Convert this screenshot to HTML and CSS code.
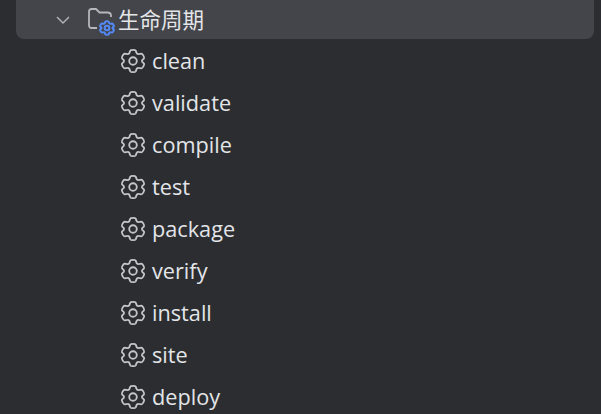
FILE: index.html
```html
<!DOCTYPE html>
<html lang="zh-CN">
<head>
  <meta charset="UTF-8">
  <title>Maven</title>
  <link rel="stylesheet" href="styles.css">
</head>
<body>
  <svg class="defs" width="0" height="0">
    <symbol id="gear" viewBox="0 0 24 24">
      <path d="M9.500 2.500C10 1.500 14 1.500 14.500 2.500L15.500 5C16 5.500 16.500 5.700 17 5.600L19.700 5.200C20.800 5.200 22.800 8.700 22.200 9.600L20.500 11.200C20.200 11.700 20.200 12.300 20.500 12.800L22.200 14.400C22.800 15.300 20.800 18.800 19.700 18.800L17 18.400C16.500 18.300 16 18.500 15.500 19L14.500 21.500C14 22.500 10 22.500 9.500 21.500L8.500 19C8 18.500 7.500 18.300 7 18.400L4.300 18.800C3.200 18.800 1.200 15.300 1.800 14.400L3.500 12.800C3.800 12.300 3.800 11.700 3.500 11.200L1.800 9.600C1.200 8.700 3.200 5.200 4.300 5.200L7 5.600C7.500 5.700 8 5.500 8.500 5z" fill="none" stroke="currentColor" stroke-linejoin="round"/>
      <circle cx="12" cy="12" r="3.500" fill="none" stroke="currentColor"/>
    </symbol>
  </svg>

  <div class="tree">
    <div class="row group">
      <svg class="chevron" viewBox="0 0 16 16"><path d="M2 5l6 6 6-6" fill="none" stroke="currentColor" stroke-width="1.500"/></svg>
      <span class="folder">
        <svg class="folder-icon" viewBox="0 0 26 26"><path d="M10 21H4.500C3 21 2 20 2 18.500V4.500C2 3 3 2 4.500 2H9l3.500 3.500h8C22.500 5.500 24 6.500 24 8.500V10" fill="none" stroke="currentColor" stroke-width="1.800"/></svg>
        <svg class="folder-gear"><use href="#gear"/></svg>
      </span>
      <span class="label">生命周期</span>
    </div>
    <div class="row goal"><svg class="gear"><use href="#gear"/></svg><span class="label">clean</span></div>
    <div class="row goal"><svg class="gear"><use href="#gear"/></svg><span class="label">validate</span></div>
    <div class="row goal"><svg class="gear"><use href="#gear"/></svg><span class="label">compile</span></div>
    <div class="row goal"><svg class="gear"><use href="#gear"/></svg><span class="label">test</span></div>
    <div class="row goal"><svg class="gear"><use href="#gear"/></svg><span class="label">package</span></div>
    <div class="row goal"><svg class="gear"><use href="#gear"/></svg><span class="label">verify</span></div>
    <div class="row goal"><svg class="gear"><use href="#gear"/></svg><span class="label">install</span></div>
    <div class="row goal"><svg class="gear"><use href="#gear"/></svg><span class="label">site</span></div>
    <div class="row goal"><svg class="gear"><use href="#gear"/></svg><span class="label">deploy</span></div>
  </div>
</body>
</html>
```

FILE: styles.css
```css
html, body {
  height: 100%;
}
body {
  margin: 0;
  background-color: #2b2d30;
  color: #e3e5e9;
  font-family: "Open Sans", "Noto Sans CJK SC", sans-serif;
  overflow: hidden;
}
.defs {
  position: absolute;
}
.row {
  display: flex;
  align-items: center;
  height: 42px;
  font-size: 21.700px;
}
.group {
  height: 39px;
  margin: 0 7px 1px 16px;
  padding-left: 39px;
  background-color: #43454a;
  border-radius: 0 0 8px 8px;
  box-sizing: border-box;
}
.chevron {
  width: 16px;
  height: 16px;
  color: #aeb1b7;
}
.folder {
  position: relative;
  width: 26px;
  height: 26px;
  margin-left: 16px;
  color: #b4b7bd;
}
.folder-icon {
  width: 26px;
  height: 26px;
}
.folder-gear {
  position: absolute;
  right: -2px;
  bottom: -3px;
  width: 16px;
  height: 16px;
  color: #548af7;
  stroke-width: 3px;
}
.label {
  padding-bottom: 2px;
}
.group .label {
  margin-left: 5px;
  font-size: 21.500px;
}
.goal {
  padding-left: 120px;
}
.gear {
  width: 26px;
  height: 26px;
  color: #c3c5ca;
  stroke-width: 1.700px;
}
.goal .label {
  margin-left: 6px;
}
```
